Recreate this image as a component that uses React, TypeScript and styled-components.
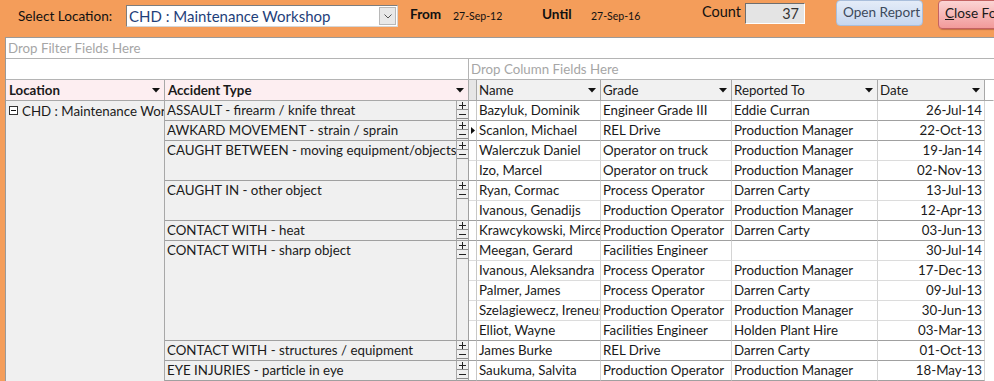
import { createGlobalStyle, styled } from "styled-components";

const GlobalStyle = createGlobalStyle`
  html, body {
    margin: 0;
    padding: 0;
    background: #f49d5a;
  }
  body {
    font-family: Lato, "Open Sans", sans-serif;
    color: #1a1a1a;
  }
`;

interface Group {
  type: string;
  rows: string[][];
}

const groups: Group[] = [
  {
    type: "ASSAULT - firearm / knife threat",
    rows: [["Bazyluk, Dominik", "Engineer Grade III", "Eddie Curran", "26-Jul-14"]],
  },
  {
    type: "AWKARD MOVEMENT - strain / sprain",
    rows: [["Scanlon, Michael", "REL Drive", "Production Manager", "22-Oct-13"]],
  },
  {
    type: "CAUGHT BETWEEN - moving equipment/objects",
    rows: [
      ["Walerczuk Daniel", "Operator on truck", "Production Manager", "19-Jan-14"],
      ["Izo, Marcel", "Operator on truck", "Production Manager", "02-Nov-13"],
    ],
  },
  {
    type: "CAUGHT IN - other object",
    rows: [
      ["Ryan, Cormac", "Process Operator", "Darren Carty", "13-Jul-13"],
      ["Ivanous, Genadijs", "Production Operator", "Production Manager", "12-Apr-13"],
    ],
  },
  {
    type: "CONTACT WITH - heat",
    rows: [["Krawcykowski, Mircea", "Production Operator", "Darren Carty", "03-Jun-13"]],
  },
  {
    type: "CONTACT WITH - sharp object",
    rows: [
      ["Meegan, Gerard", "Facilities Engineer", "", "30-Jul-14"],
      ["Ivanous, Aleksandra", "Process Operator", "Production Manager", "17-Dec-13"],
      ["Palmer, James", "Process Operator", "Darren Carty", "09-Jul-13"],
      ["Szelagiewecz, Ireneusz", "Production Operator", "Production Manager", "30-Jun-13"],
      ["Elliot, Wayne", "Facilities Engineer", "Holden Plant Hire", "03-Mar-13"],
    ],
  },
  {
    type: "CONTACT WITH - structures / equipment",
    rows: [["James Burke", "REL Drive", "Darren Carty", "01-Oct-13"]],
  },
  {
    type: "EYE INJURIES - particle in eye",
    rows: [["Saukuma, Salvita", "Production Operator", "Production Manager", "18-May-13"]],
  },
];

const Page = styled.div`
  width: 994px;
  height: 381px;
  overflow: hidden;
  display: flex;
  flex-direction: column;
`;

const Toolbar = styled.div`
  height: 37px;
  flex: none;
  display: flex;
  align-items: flex-start;
  padding-left: 18px;
  overflow: hidden;
  white-space: nowrap;
`;

const Field = styled.div<{ $w: number; $top: number; $size?: number; $bold?: boolean }>`
  flex: none;
  width: ${(p) => p.$w}px;
  margin-top: ${(p) => p.$top}px;
  font-size: ${(p) => p.$size ?? 13.6}px;
  font-weight: ${(p) => (p.$bold ? 700 : 400)};
  line-height: 18px;
  color: #111;
`;

const Combo = styled.div`
  flex: none;
  box-sizing: border-box;
  width: 272px;
  height: 22px;
  margin-top: 5px;
  margin-right: 12px;
  border: 1px solid #7d7d7d;
  border-bottom-color: #d6d6d6;
  border-right-color: #d6d6d6;
  background: #fff;
  display: flex;
  align-items: center;
  padding-left: 2px;
  font-size: 15px;
  color: #1f3f7a;
`;

const ComboText = styled.span`
  flex: 1;
`;

const ComboButton = styled.div`
  width: 17px;
  height: 18px;
  margin-right: 1px;
  box-sizing: border-box;
  border: 1px solid #b8b8b8;
  background: #e8e8e8;
  display: flex;
  align-items: center;
  justify-content: center;
`;

const CountBox = styled.div`
  flex: none;
  box-sizing: border-box;
  width: 60px;
  height: 21px;
  margin-top: 3px;
  margin-right: 31px;
  border: 1px solid #fff;
  border-top-color: #6e6e6e;
  border-left-color: #6e6e6e;
  background: #e4e4e4;
  text-align: right;
  padding-right: 5px;
  font-size: 14.5px;
  line-height: 19px;
  color: #333;
`;

const Button = styled.div<{ $tone: "blue" | "red"; $w: number; $h: number }>`
  flex: none;
  box-sizing: border-box;
  width: ${(p) => p.$w}px;
  height: ${(p) => p.$h}px;
  margin-right: 15px;
  border-radius: 4px;
  border: 1px solid ${(p) => (p.$tone === "blue" ? "#a9bedb" : "#c46262")};
  background: ${(p) =>
    p.$tone === "blue"
      ? "linear-gradient(#e4ecf8, #c7d7ef)"
      : "linear-gradient(#fbd4d4, #f29a9a)"};
  font-size: 13.6px;
  line-height: ${(p) => p.$h - 4}px;
  padding-left: ${(p) => (p.$tone === "blue" ? 6 : 6)}px;
  color: ${(p) => (p.$tone === "blue" ? "#3d4a5c" : "#1a1a1a")};
  box-shadow: ${(p) => (p.$tone === "red" ? "1px 1px 1px rgba(120,40,40,0.4)" : "none")};
`;

const Pivot = styled.div`
  flex: 1;
  margin-left: 5px;
  border-left: 1px solid #9a9a9a;
  border-top: 1px solid #9a9a9a;
  background: #fff;
  display: flex;
  flex-direction: column;
  overflow: hidden;
`;

const DropRow = styled.div`
  box-sizing: border-box;
  height: 21px;
  flex: none;
  border-bottom: 1px solid #b4b4b4;
  display: flex;
  font-size: 13.3px;
  line-height: 20px;
  color: #a6a6a6;
`;

const DropLeft = styled.div<{ $w: number }>`
  width: ${(p) => p.$w}px;
  flex: none;
  border-right: 1px solid #b4b4b4;
`;

const DropText = styled.div`
  padding-left: 2px;
`;

const Grid = styled.div`
  display: grid;
  grid-template-columns: 159px 292px 12px 8px 124px 131px 146px 107px 1fr;
  grid-template-rows: 21px repeat(14, 20px);
  font-size: 13.3px;
`;

const HeadCell = styled.div<{ $kind: "row" | "col" | "sel" | "none"; $span?: number }>`
  box-sizing: border-box;
  grid-column: span ${(p) => p.$span ?? 1};
  display: flex;
  align-items: center;
  padding: 0 4px 0 ${(p) => (p.$kind === "row" ? 3 : 2)}px;
  font-weight: ${(p) => (p.$kind === "row" ? 700 : 400)};
  background: ${(p) =>
    p.$kind === "row" ? "#fdeef1" : p.$kind === "col" ? "#f1f1f1" : p.$kind === "sel" ? "#e6e6e6" : "#fff"};
  border-right: 1px solid ${(p) => (p.$kind === "none" ? "transparent" : "#a8a8a8")};
  border-bottom: 1px solid #a8a8a8;
  white-space: nowrap;
`;

const HeadLabel = styled.span`
  flex: 1;
`;

const LocationCell = styled.div`
  box-sizing: border-box;
  grid-column: 1;
  grid-row: 2 / span 14;
  background: #f0f0f0;
  border-right: 1px solid #a8a8a8;
  display: flex;
  align-items: flex-start;
  padding: 1px 0 0 3px;
  white-space: nowrap;
  overflow: hidden;
  line-height: 18px;
`;

const Expander = styled.span`
  display: inline-flex;
  margin: 4px 4px 0 0;
  flex: none;
`;

const TypeCell = styled.div<{ $row: number; $span: number }>`
  box-sizing: border-box;
  grid-column: 2;
  grid-row: ${(p) => p.$row} / span ${(p) => p.$span};
  background: #f0f0f0;
  border-right: 1px solid #a8a8a8;
  border-bottom: 1px solid #a0a0a0;
  padding: 0 0 0 2px;
  line-height: 19px;
  white-space: nowrap;
  overflow: hidden;
`;

const ToggleCell = styled.div<{ $row: number; $span: number }>`
  box-sizing: border-box;
  grid-column: 3;
  grid-row: ${(p) => p.$row} / span ${(p) => p.$span};
  background: #f0f0f0;
  border-right: 1px solid #a0a0a0;
  border-bottom: 1px solid #a0a0a0;
  display: flex;
  flex-direction: column;
`;

const Toggle = styled.div`
  box-sizing: border-box;
  height: 9px;
  width: 11px;
  border-bottom: 1px solid #8c8c8c;
  display: flex;
  align-items: center;
  justify-content: center;
`;

const SelCell = styled.div<{ $last: boolean }>`
  box-sizing: border-box;
  grid-column: 4;
  background: #fff;
  border-right: 1px solid #c8c8c8;
  border-bottom: 1px solid ${(p) => (p.$last ? "#a0a0a0" : "#dcdcdc")};
  display: flex;
  align-items: center;
  justify-content: center;
`;

const DataCell = styled.div<{ $last: boolean; $right?: boolean }>`
  box-sizing: border-box;
  background: #fff;
  border-right: 1px solid #d4d4d4;
  border-bottom: 1px solid ${(p) => (p.$last ? "#a0a0a0" : "#dcdcdc")};
  padding: 0 ${(p) => (p.$right ? 2 : 0)}px 0 2px;
  text-align: ${(p) => (p.$right ? "right" : "left")};
  line-height: 19px;
  white-space: nowrap;
  overflow: hidden;
`;

const Filler = styled.div`
  grid-column: 9;
`;

function DownArrow() {
  return (
    <svg width="8" height="5" viewBox="0 0 8 5">
      <path d="M0 0h8L4 4.5z" fill="#111" />
    </svg>
  );
}

function ComboArrow() {
  return (
    <svg width="8" height="5" viewBox="0 0 8 5">
      <path d="M0.5 0.5L4 4 7.5 0.5" fill="none" stroke="#555" strokeWidth="1" />
    </svg>
  );
}

function Plus() {
  return (
    <svg width="7" height="7" viewBox="0 0 7 7">
      <path d="M0 3.5h7M3.5 0v7" stroke="#222" strokeWidth="1" />
    </svg>
  );
}

function Minus() {
  return (
    <svg width="7" height="7" viewBox="0 0 7 7">
      <path d="M0 3.5h7" stroke="#222" strokeWidth="1" />
    </svg>
  );
}

function Collapse() {
  return (
    <svg width="9" height="9" viewBox="0 0 9 9">
      <rect x="0.5" y="0.5" width="8" height="8" fill="#fff" stroke="#333" />
      <path d="M2 4.5h5" stroke="#111" />
    </svg>
  );
}

function Pointer() {
  return (
    <svg width="4" height="7" viewBox="0 0 4 7">
      <path d="M0 0l4 3.5L0 7z" fill="#111" />
    </svg>
  );
}

export default function App() {
  let row = 2;
  const body: JSX.Element[] = [];
  groups.forEach((g, gi) => {
    const start = row;
    body.push(
      <TypeCell key={`t${gi}`} $row={start} $span={g.rows.length}>
        {g.type}
      </TypeCell>,
      <ToggleCell key={`b${gi}`} $row={start} $span={g.rows.length}>
        <Toggle>
          <Plus />
        </Toggle>
        <Toggle>
          <Minus />
        </Toggle>
      </ToggleCell>
    );
    g.rows.forEach((r, ri) => {
      const last = ri === g.rows.length - 1;
      const key = `${gi}-${ri}`;
      body.push(
        <SelCell key={`s${key}`} $last={last} style={{ gridRow: row }}>
          {gi === 1 && <Pointer />}
        </SelCell>,
        <DataCell key={`n${key}`} $last={last} style={{ gridRow: row }}>{r[0]}</DataCell>,
        <DataCell key={`g${key}`} $last={last} style={{ gridRow: row }}>{r[1]}</DataCell>,
        <DataCell key={`r${key}`} $last={last} style={{ gridRow: row }}>{r[2]}</DataCell>,
        <DataCell key={`d${key}`} $last={last} $right style={{ gridRow: row }}>{r[3]}</DataCell>,
        <Filler key={`f${key}`} style={{ gridRow: row }} />
      );
      row += 1;
    });
  });

  return (
    <Page>
      <GlobalStyle />
      <Toolbar>
        <Field $w={108} $top={7}>Select Location:</Field>
        <Combo>
          <ComboText>CHD : Maintenance Workshop</ComboText>
          <ComboButton>
            <ComboArrow />
          </ComboButton>
        </Combo>
        <Field $w={43} $top={5} $bold>From</Field>
        <Field $w={89} $top={7} $size={10.5}>27-Sep-12</Field>
        <Field $w={49} $top={5} $bold>Until</Field>
        <Field $w={111} $top={7} $size={10.5}>27-Sep-16</Field>
        <Field $w={43} $top={3} $size={14.5}>Count</Field>
        <CountBox>37</CountBox>
        <Button $tone="blue" $w={87} $h={26}>Open Report</Button>
        <Button $tone="red" $w={80} $h={29}>
          <u>C</u>lose Form
        </Button>
      </Toolbar>
      <Pivot>
        <DropRow>
          <DropText>Drop Filter Fields Here</DropText>
        </DropRow>
        <DropRow>
          <DropLeft $w={462} />
          <DropText>Drop Column Fields Here</DropText>
        </DropRow>
        <Grid>
          <HeadCell $kind="row">
            <HeadLabel>Location</HeadLabel>
            <DownArrow />
          </HeadCell>
          <HeadCell $kind="row" $span={2}>
            <HeadLabel>Accident Type</HeadLabel>
            <DownArrow />
          </HeadCell>
          <HeadCell $kind="sel" />
          <HeadCell $kind="col">
            <HeadLabel>Name</HeadLabel>
            <DownArrow />
          </HeadCell>
          <HeadCell $kind="col">
            <HeadLabel>Grade</HeadLabel>
            <DownArrow />
          </HeadCell>
          <HeadCell $kind="col">
            <HeadLabel>Reported To</HeadLabel>
            <DownArrow />
          </HeadCell>
          <HeadCell $kind="col">
            <HeadLabel>Date</HeadLabel>
            <DownArrow />
          </HeadCell>
          <HeadCell $kind="none" />
          <LocationCell>
            <Expander>
              <Collapse />
            </Expander>
            CHD : Maintenance Workshop
          </LocationCell>
          {body}
        </Grid>
      </Pivot>
    </Page>
  );
}
